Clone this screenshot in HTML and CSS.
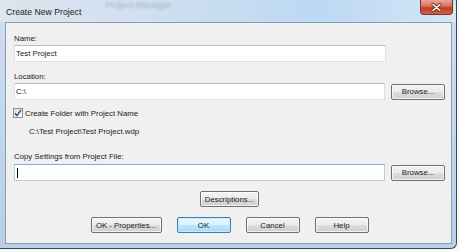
FILE: index.html
```html
<!DOCTYPE html>
<html lang="en">
<head>
    <meta charset="UTF-8">
    <title>Create New Project</title>
    <link rel="stylesheet" href="styles.css">
</head>
<body>
    <div class="window">
        <div class="titlebar">
            <span class="title">Create New Project</span>
            <span class="ghost">Project Manager</span>
            <button class="close">
                <svg width="11" height="9" viewBox="0 0 11 9">
                    <path d="M2 1.5 L9 7.5 M9 1.5 L2 7.5" stroke="#6b2a20" stroke-width="3" stroke-linecap="round"/>
                    <path d="M2 1.5 L9 7.5 M9 1.5 L2 7.5" stroke="#fff" stroke-width="1.6" stroke-linecap="round"/>
                </svg>
            </button>
        </div>
        <div class="client">
            <div class="label first">Name:</div>
            <div class="field">Test Project</div>

            <div class="label">Location:</div>
            <div class="row">
                <div class="field">C:\</div>
                <button class="button browse">Browse...</button>
            </div>

            <div class="check-row">
                <span class="checkbox">
                    <svg width="8" height="8" viewBox="0 0 8 8">
                        <path d="M1 4.2 L3 6.6 L7 0.8" fill="none" stroke="#2c4a8c" stroke-width="1.4"/>
                    </svg>
                </span>
                <span>Create Folder with Project Name</span>
            </div>
            <div class="path">C:\Test Project\Test Project.wdp</div>

            <div class="label copy">Copy Settings from Project File:</div>
            <div class="row tight">
                <div class="field focused"><span class="caret"></span></div>
                <button class="button browse">Browse...</button>
            </div>

            <div class="center-row">
                <button class="button desc">Descriptions...</button>
            </div>

            <div class="actions">
                <button class="button wide">OK - Properties...</button>
                <button class="button default">OK</button>
                <button class="button">Cancel</button>
                <button class="button">Help</button>
            </div>
        </div>
    </div>
</body>
</html>
```
FILE: styles.css
```css
body {
    margin: 0;
    background-color: #f4f6f8;
    font-family: "Liberation Sans", Arial, sans-serif;
}
.window {
    width: 456px;
    height: 248px;
    border-right: 1px solid #3f4a56;
    border-bottom: 1px solid #3f4a56;
    border-radius: 0 0 6px 0;
    background: linear-gradient(to bottom, #cfdeee, #b8cfe6);
    display: flex;
    flex-direction: column;
}
.titlebar {
    height: 22px;
    display: flex;
    align-items: flex-start;
    background: linear-gradient(to right, #dde5ee 0%, #cfdfef 35%, #bcd8f3 70%, #d4e6f7 100%);
    border-radius: 0 6px 0 0;
}
.title {
    font-size: 8.7px;
    color: #1b1b1b;
    margin: 7px 0 0 6px;
}
.ghost {
    font-size: 9px;
    color: #9fb3c8;
    filter: blur(1.3px);
    margin: 0 0 0 24px;
}
.close {
    margin: 0 3px 0 auto;
    width: 33px;
    height: 15px;
    padding: 0;
    border: 1px solid #7a3227;
    border-top: none;
    border-radius: 0 0 4px 4px;
    background: linear-gradient(to bottom, #e8a596 0%, #d9705d 45%, #c43a22 55%, #d2604a 100%);
    display: flex;
    align-items: center;
    justify-content: center;
}
.client {
    flex: 1;
    margin: 0 4px 4px 5px;
    border: 1px solid #8b9db1;
    background-color: #f0f0f0;
    padding: 0 6px 0 8px;
    display: flex;
    flex-direction: column;
    font-size: 7.8px;
    color: #1a1a1a;
}
.label {
    height: 10px;
    line-height: 10px;
    margin-top: 10px;
}
.label.first {
    margin-top: 11px;
}
.label.copy {
    margin-top: 15px;
}
.field {
    height: 17px;
    box-sizing: border-box;
    margin-top: 1px;
    border: 1px solid #dcdfe5;
    border-top-color: #b9bcc3;
    background-color: #fff;
    line-height: 15px;
    padding-left: 1px;
    width: 372px;
}
.row {
    display: flex;
    align-items: center;
    gap: 6px;
    margin-top: 1px;
}
.row .field {
    margin-top: 0;
}
.row.tight {
    margin-top: 2px;
}
.field.focused {
    border-color: #b3cfea;
    border-top-color: #7eaad6;
    display: flex;
    align-items: center;
}
.caret {
    width: 1px;
    height: 10px;
    background-color: #000;
    margin-left: 1px;
}
.button {
    height: 16px;
    padding: 0;
    box-sizing: border-box;
    border: 1px solid #707070;
    border-radius: 2px;
    background: linear-gradient(to bottom, #f3f3f3 0%, #ebebeb 50%, #dddddd 51%, #cfcfcf 100%);
    box-shadow: inset 0 0 0 1px rgba(255, 255, 255, 0.7);
    font-family: "Liberation Sans", Arial, sans-serif;
    font-size: 7.8px;
    color: #1a1a1a;
    width: 54px;
}
.browse {
    width: 54px;
}
.check-row {
    display: flex;
    align-items: center;
    gap: 2px;
    height: 12px;
    margin-top: 7px;
    margin-left: -1px;
}
.checkbox {
    width: 10px;
    height: 10px;
    box-sizing: border-box;
    border: 1px solid #8e8f8f;
    background: linear-gradient(to bottom right, #dcdcdc, #fbfbfb);
    display: flex;
    align-items: center;
    justify-content: center;
}
.path {
    height: 10px;
    line-height: 10px;
    margin-top: 8px;
    padding-left: 15px;
}
.center-row {
    display: flex;
    justify-content: center;
    margin-top: 10px;
}
.desc {
    width: 59px;
}
.actions {
    display: flex;
    justify-content: center;
    gap: 15px;
    margin-top: 10px;
}
.wide {
    width: 71px;
}
.default {
    border-color: #3c7fb1;
    background: linear-gradient(to bottom, #eaf6fd 0%, #d9f0fc 50%, #bee6fd 51%, #a7d9f5 100%);
    box-shadow: inset 0 0 0 1px #c8ecfb;
}
```
